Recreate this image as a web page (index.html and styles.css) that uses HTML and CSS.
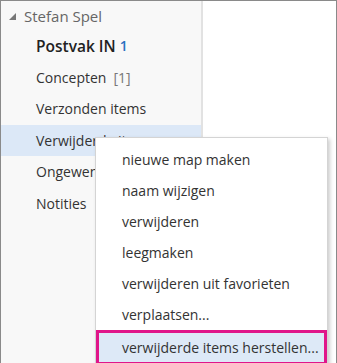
FILE: index.html
```html
<!DOCTYPE html>
<html>
<head>
<meta charset="utf-8">
<link rel="stylesheet" href="styles.css">
</head>
<body>
<div class="frame">
  <div class="pane">
    <div class="account"><span class="tri"></span>Stefan Spel</div>
    <div class="folder bold">Postvak IN <span class="count">1</span></div>
    <div class="folder">Concepten <span class="draft">[1]</span></div>
    <div class="folder">Verzonden items</div>
    <div class="folder selected">Verwijderde items</div>
    <div class="folder">Ongewenste e-mail</div>
    <div class="folder">Notities</div>
  </div>
  <div class="main"></div>
  <div class="menu">
    <div class="item">nieuwe map maken</div>
    <div class="item">naam wijzigen</div>
    <div class="item">verwijderen</div>
    <div class="item">leegmaken</div>
    <div class="item">verwijderen uit favorieten</div>
    <div class="item">verplaatsen...</div>
    <div class="item marked">verwijderde items herstellen...</div>
  </div>
</div>
</body>
</html>
```
FILE: styles.css
```css
html, body {
  margin: 0;
  padding: 0;
  background: #fff;
}
.frame {
  position: relative;
  width: 337px;
  height: 363px;
  box-sizing: border-box;
  border: 1px solid #8a8a8a;
  border-bottom: none;
  display: flex;
  overflow: hidden;
  font-family: "Open Sans", "Noto Sans", sans-serif;
  font-size: 14px;
  color: #333;
}
.pane {
  width: 200px;
  background: #f8f8f8;
  border-right: 2px solid #e2e2e2;
  display: flex;
  flex-direction: column;
}
.main {
  flex: 1;
  background: #fff;
}
.account {
  height: 29px;
  display: flex;
  align-items: center;
  padding-left: 8px;
  color: #666;
  font-size: 15px;
}
.tri {
  width: 0;
  height: 0;
  border-left: 7px solid transparent;
  border-bottom: 7px solid #777;
  margin-right: 8px;
  margin-top: 2px;
}
.folder {
  height: 31.5px;
  display: flex;
  align-items: center;
  padding-left: 35px;
  white-space: nowrap;
}
.bold {
  font-weight: 600;
  font-size: 15.5px;
  color: #222;
}
.count {
  color: #2a6fbf;
  font-weight: 600;
  font-size: 14px;
  margin-left: 4px;
}
.draft {
  color: #777;
  margin-left: 7px;
}
.selected {
  background: #dce8f7;
}
.menu {
  position: absolute;
  left: 94px;
  top: 136px;
  width: 231px;
  background: #fff;
  border: 1px solid #d4d4d4;
  box-shadow: 2px 2px 4px rgba(0,0,0,0.2);
  padding-top: 6px;
}
.item {
  height: 31px;
  display: flex;
  align-items: center;
  padding-left: 26px;
  white-space: nowrap;
}
.marked {
  background: #dde9f7;
  border: 3px solid #e0168a;
  box-sizing: border-box;
  height: 35px;
  padding-left: 23px;
}
```
